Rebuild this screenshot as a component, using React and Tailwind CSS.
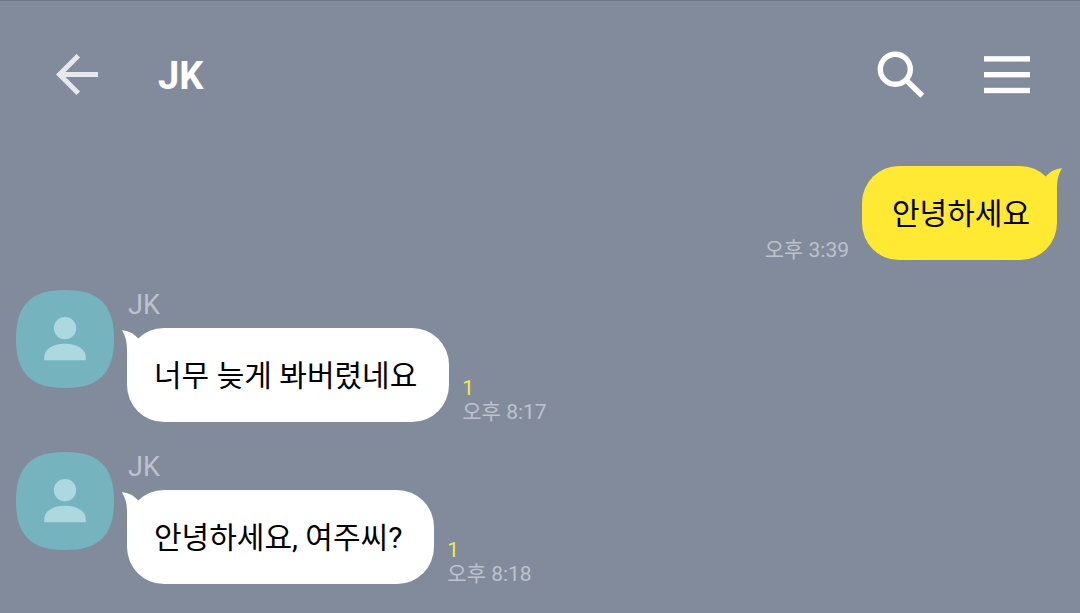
const messages = [
  { id: 1, mine: true, text: '안녕하세요', time: '오후 3:39' },
  { id: 2, sender: 'JK', text: '너무 늦게 봐버렸네요', time: '오후 8:17', unread: 1 },
  { id: 3, sender: 'JK', text: '안녕하세요, 여주씨?', time: '오후 8:18', unread: 1 },
]

function BackIcon() {
  return (
    <svg className="w-[42px] h-[42px]" viewBox="0 0 42 42" fill="none" stroke="#e6e8ec" strokeWidth="5" aria-hidden="true">
      <path d="M22.3 1.7 L3.5 20.5 L22.3 39.3" />
      <path d="M4 20.5 H42" />
    </svg>
  )
}

function SearchIcon() {
  return (
    <svg className="w-12 h-12" viewBox="0 0 48 48" fill="none" stroke="#fff" strokeWidth="5.4" aria-hidden="true">
      <circle cx="18.3" cy="18.2" r="15" />
      <path d="M29 29 L45.3 44.7" />
    </svg>
  )
}

function MenuIcon() {
  return (
    <svg className="w-[46px] h-[38px]" viewBox="0 0 46 38" fill="#fff" aria-hidden="true">
      <rect width="46" height="5.4" y="0.2" />
      <rect width="46" height="5.4" y="16" />
      <rect width="46" height="5.4" y="31.8" />
    </svg>
  )
}

function Avatar() {
  return (
    <svg className="w-[98px] h-[98px] shrink-0" viewBox="0 0 99 99" aria-hidden="true">
      <path
        d="M49.5 0 C84 0 99 15 99 49.5 C99 84 84 99 49.5 99 C15 99 0 84 0 49.5 C0 15 15 0 49.5 0 Z"
        fill="#75b4bf"
      />
      <circle cx="49.5" cy="38.5" r="11.3" fill="#acd9df" />
      <path d="M28.5 71 V68 C28.5 60 37 54.3 49.5 54.3 C62 54.3 70.5 60 70.5 68 V71 Z" fill="#acd9df" />
    </svg>
  )
}

function Bubble({ mine, children }) {
  return (
    <div
      className={`relative rounded-[37px] pt-[25px] pb-[23px] ${
        mine ? 'pl-[30px] pr-[27px] bg-[#ffe933]' : 'pl-[27px] pr-8 bg-white'
      }`}
    >
      <svg
        className={`absolute top-0.5 w-4 h-9 ${mine ? '-right-[5px] -scale-x-100' : '-left-[5px]'}`}
        viewBox="0 0 16 36"
        fill={mine ? '#ffe933' : '#fff'}
        aria-hidden="true"
      >
        <path d="M0 0.3 C6 0.8 11.5 3.2 16 8.3 L5 35 V19 C5 12 3.5 6 0 0.3 Z" />
      </svg>
      <p className="text-[30px] leading-[46px] text-black">{children}</p>
    </div>
  )
}

function Meta({ time, unread }) {
  return (
    <div className="flex flex-col -mb-0.5 text-[21px] leading-6">
      {unread && <span className="text-[#f5e94a]">{unread}</span>}
      <time className="text-[#bdc2cc]">{time}</time>
    </div>
  )
}

function Message({ message }) {
  const { mine, sender, text, time, unread } = message

  if (mine) {
    return (
      <li className="flex justify-end items-end gap-[13px] pr-[7px]">
        <Meta time={time} />
        <Bubble mine>{text}</Bubble>
      </li>
    )
  }

  return (
    <li className="flex items-start gap-[13px]">
      <Avatar />
      <div>
        <div className="text-[27px] leading-[30px] pl-px pb-2 text-[#bdc2cc]">{sender}</div>
        <div className="flex items-end gap-[13px]">
          <Bubble>{text}</Bubble>
          <Meta time={time} unread={unread} />
        </div>
      </div>
    </li>
  )
}

export default function App() {
  return (
    <div className="min-h-screen bg-[#828b9b] border-t border-[#6f788a] font-['Roboto','Noto_Sans_CJK_KR',sans-serif]">
      <header className="flex items-center h-[148px] pl-14 pr-[50px]">
        <button type="button" aria-label="뒤로">
          <BackIcon />
        </button>
        <h1 className="flex-1 pl-[60px] pt-0.5 text-[38px] leading-[46px] font-bold text-white">JK</h1>
        <button type="button" aria-label="검색" className="mr-[59px]">
          <SearchIcon />
        </button>
        <button type="button" aria-label="메뉴">
          <MenuIcon />
        </button>
      </header>

      <main className="px-4 pt-[17px] pb-7">
        <ul className="flex flex-col gap-[30px]">
          {messages.map(m => (
            <Message key={m.id} message={m} />
          ))}
        </ul>
      </main>
    </div>
  )
}
